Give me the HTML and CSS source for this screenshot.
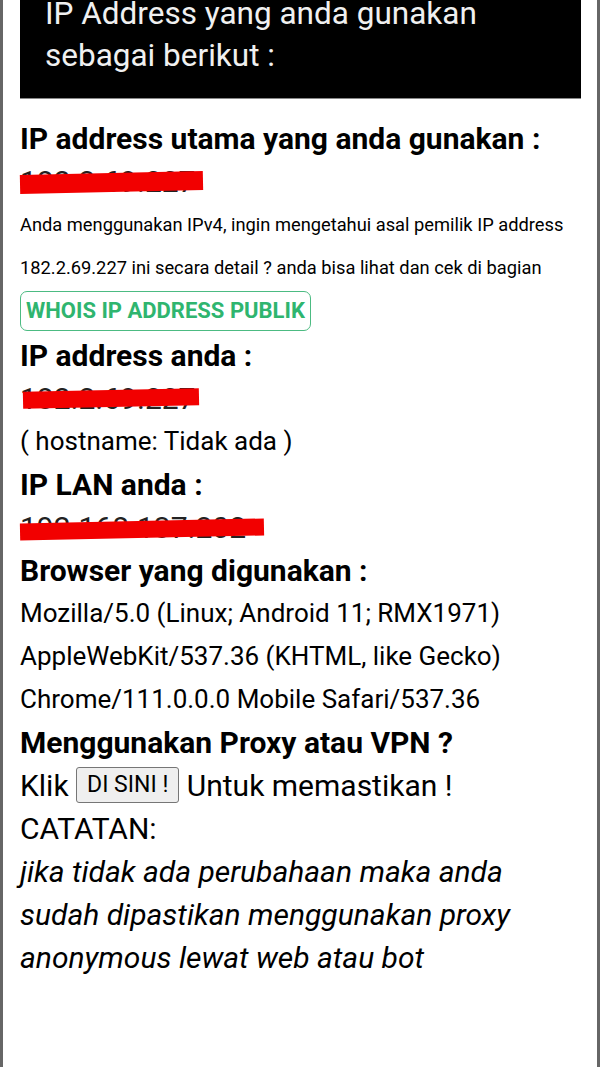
FILE: index.html
```html
<!DOCTYPE html>
<html lang="id">
<head>
  <meta charset="UTF-8">
  <title>Cek IP Address</title>
  <meta name="viewport" content="width=device-width, initial-scale=1.0">
  <link rel="stylesheet" href="styles.css">
</head>
<body>

  <div class="page">
    <div class="title-box">
      <p>IP Address yang anda gunakan</p>
      <p>sebagai berikut :</p>
    </div>

    <h2>IP address utama yang anda gunakan :</h2>
    <p class="line"><span class="hidden-ip ip-main">182.2.69.227</span></p>
    <p class="small">Anda menggunakan IPv4, ingin mengetahui asal pemilik IP address</p>
    <p class="small">182.2.69.227 ini secara detail ? anda bisa lihat dan cek di bagian</p>
    <a class="whois-btn" href="#">WHOIS IP ADDRESS PUBLIK</a>

    <h2>IP address anda :</h2>
    <p class="line"><span class="hidden-ip ip-you">182.2.69.227</span></p>
    <p class="line ua">( hostname: Tidak ada )</p>

    <h2>IP LAN anda :</h2>
    <p class="line"><span class="hidden-ip ip-lan">192.168.137.202</span></p>

    <h2>Browser yang digunakan :</h2>
    <p class="line ua">Mozilla/5.0 (Linux; Android 11; RMX1971)</p>
    <p class="line ua">AppleWebKit/537.36 (KHTML, like Gecko)</p>
    <p class="line ua">Chrome/111.0.0.0 Mobile Safari/537.36</p>

    <h2>Menggunakan Proxy atau VPN ?</h2>
    <p class="line">Klik <button class="check-btn" onclick="alert('Memeriksa...')">DI SINI !</button> Untuk memastikan !</p>
    <p class="line">CATATAN:</p>
    <p class="line note">jika tidak ada perubahaan maka anda</p>
    <p class="line note">sudah dipastikan menggunakan proxy</p>
    <p class="line note">anonymous lewat web atau bot</p>
  </div>

</body>
</html>
```

FILE: styles.css
```css
* {
  box-sizing: border-box;
  margin: 0;
  padding: 0;
}

body {
  font-family: Roboto, 'Noto Sans', sans-serif;
  background-color: #fff;
  color: #000;
}

.page {
  min-height: 1067px;
  border-left: 3px solid #666;
  border-right: 3px solid #666;
  padding: 0 16px 0 17px;
  overflow: hidden;
}

.title-box {
  background-color: #000;
  color: #f0f0f0;
  margin-top: -7px;
  padding: 0 20px 21px 25px;
  font-size: 31.5px;
  font-weight: 400;
  line-height: 42px;
  border-bottom: 1px solid #888;
}

h2 {
  font-size: 30px;
  font-weight: 700;
  line-height: 43px;
  white-space: nowrap;
}

.title-box + h2 {
  margin-top: 18px;
}

.line {
  font-size: 30px;
  line-height: 43px;
  white-space: nowrap;
}

.line.ua {
  font-size: 26px;
}

.small {
  font-size: 18.3px;
  line-height: 43px;
  white-space: nowrap;
}

.note {
  font-style: italic;
}

.hidden-ip {
  position: relative;
  display: inline-block;
  color: #222;
}

.hidden-ip::after {
  content: "";
  position: absolute;
  background-color: #f20000;
  transform: rotate(-1.2deg);
}

.ip-main::after {
  left: 0;
  top: 13px;
  width: 183px;
  height: 19px;
}

.ip-you::after {
  left: 3px;
  top: 13px;
  width: 176px;
  height: 17px;
}

.ip-lan::after {
  left: 0;
  top: 15px;
  width: 244px;
  height: 17px;
}

.whois-btn {
  display: inline-block;
  margin: 2px 0 3px;
  height: 40px;
  padding: 0 5px;
  border: 1.5px solid #4cbb82;
  border-radius: 7px;
  color: #2fb56f;
  font-size: 22px;
  font-weight: 700;
  line-height: 37px;
  text-decoration: none;
}

.check-btn {
  font-family: Roboto, 'Noto Sans', sans-serif;
  font-size: 23px;
  height: 36px;
  padding: 0 10px;
  vertical-align: 4px;
  background-color: #efefef;
  border: 1px solid #767676;
  border-radius: 3px;
  color: #000;
  cursor: pointer;
}
```
